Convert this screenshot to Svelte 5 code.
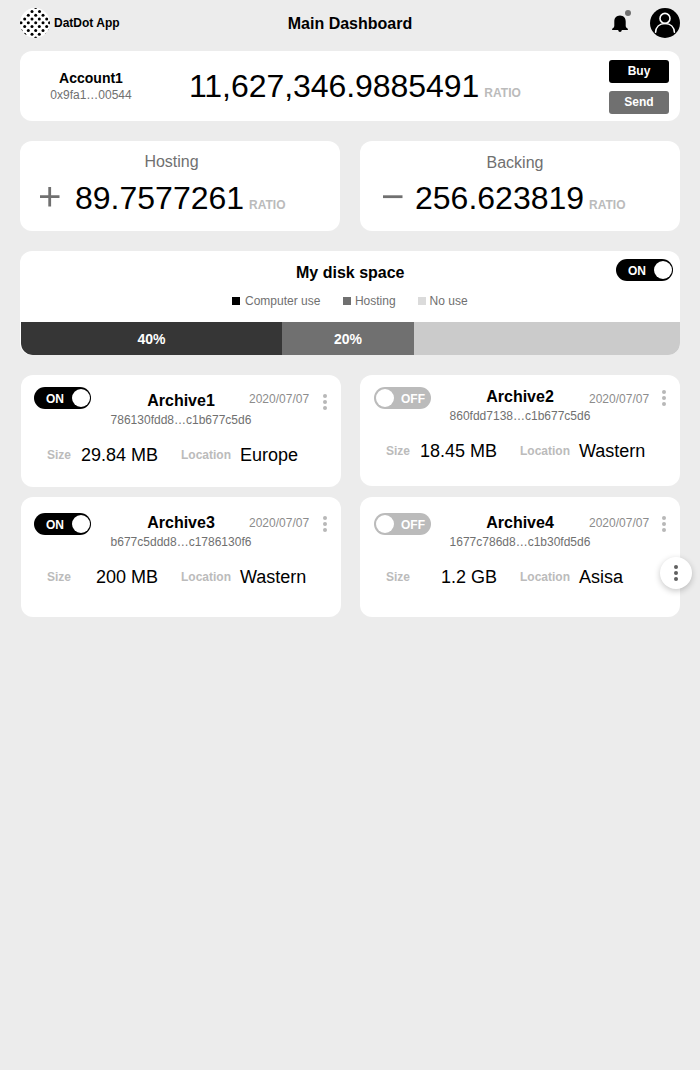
<script>
  const dotRows = [
    [15.7],
    [12, 19.5],
    [8.3, 15.7, 23],
    [4.7, 12, 19.3, 26.7],
    [1, 8.3, 15.7, 23, 29.5],
    [4.7, 12, 19.3, 26.7],
    [1, 8.3, 15.7, 23, 29.5],
    [4.7, 12, 19.3, 26.7],
    [15.7]
  ];
  const balances = [
    { label: 'Hosting', sign: 'plus', amount: '89.7577261' },
    { label: 'Backing', sign: 'minus', amount: '256.623819' }
  ];
  const legend = [
    { label: 'Computer use', color: '#000' },
    { label: 'Hosting', color: '#707070' },
    { label: 'No use', color: '#dbdbdb' }
  ];
  const archives = [
    { name: 'Archive1', hash: '786130fdd8…c1b677c5d6', on: true, size: '29.84 MB', location: 'Europe' },
    { name: 'Archive2', hash: '860fdd7138…c1b677c5d6', on: false, size: '18.45 MB', location: 'Wastern' },
    { name: 'Archive3', hash: 'b677c5ddd8…c1786130f6', on: true, size: '200 MB', location: 'Wastern' },
    { name: 'Archive4', hash: '1677c786d8…c1b30fd5d6', on: false, size: '1.2 GB', location: 'Asisa' }
  ];
</script>

{#snippet toggle(on)}
  <button class="toggle" class:off={!on}>
    <span class="state">{on ? 'ON' : 'OFF'}</span><span class="knob"></span>
  </button>
{/snippet}

{#snippet kebab(color)}
  <svg class="kebab" width="4" height="16" viewBox="0 0 4 16" fill={color}>
    <circle cx="2" cy="2" r="2" /><circle cx="2" cy="8" r="2" /><circle cx="2" cy="14" r="2" />
  </svg>
{/snippet}

<div class="page">
  <header>
    <div class="brand">
      <svg width="30" height="30" viewBox="0 0 30 30">
        <defs><clipPath id="disc"><circle cx="15" cy="15" r="15" /></clipPath></defs>
        <circle cx="15" cy="15" r="15" fill="#fff" />
        <g clip-path="url(#disc)">
          {#each dotRows as row, i}
            {#each row as x}<circle cx={x} cy={-0.4 + i * 3.8} r="1.5" />{/each}
          {/each}
        </g>
      </svg>
      <span>DatDot App</span>
    </div>
    <h1>Main Dashboard</h1>
    <div class="actions">
      <svg width="22" height="25" viewBox="0 0 22 25">
        <path d="M9 7.600C5.300 7.900 3.300 10 3.300 13.500v4.300c0 1.300-.6 2-1.400 2.500-.6.400-.9.700-.9 1.300 0 .3.200.5.500.5H7.200c.1 1.200.8 1.900 1.800 1.900s1.700-.7 1.800-1.900h5.700c.3 0 .5-.2.500-.5 0-.6-.3-.9-.9-1.300-.8-.5-1.400-1.200-1.400-2.500v-4.300C14.700 10 12.700 7.900 9 7.600z" />
        <circle cx="17" cy="5" r="3" fill="#707070" />
      </svg>
      <svg width="30" height="30" viewBox="0 0 30 30">
        <circle cx="15" cy="15" r="15" />
        <g fill="none" stroke="#fff" stroke-width="1.600" stroke-linecap="round">
          <circle cx="15" cy="10.400" r="5" />
          <path d="M5.600 24.300C5.900 19.300 9.300 15.500 15 15.500s9.100 3.800 9.400 8.800" />
        </g>
      </svg>
    </div>
  </header>

  <section class="card account">
    <div class="owner"><b>Account1</b><span>0x9fa1…00544</span></div>
    <div class="total"><span class="amount">11,627,346.9885491</span><span class="unit">RATIO</span></div>
    <div class="trade"><button>Buy</button><button class="send">Send</button></div>
  </section>

  <div class="balances">
    {#each balances as b}
      <section class="card balance {b.sign}">
        <h2>{b.label}</h2>
        <div class="row">
          <svg width="20" height="20" viewBox="0 0 20 20" stroke="#707070" stroke-width="2.800">
            <path d={b.sign === 'plus' ? 'M0 9.700H19.500M9.700 0V19.500' : 'M0 9.700H19.500'} />
          </svg>
          <span class="amount">{b.amount}</span><span class="unit">RATIO</span>
        </div>
      </section>
    {/each}
  </div>

  <section class="card disk">
    <div class="diskhead"><h2>My disk space</h2>{@render toggle(true)}</div>
    <ul>
      {#each legend as item}
        <li><i style:background={item.color}></i>{item.label}</li>
      {/each}
    </ul>
    <div class="bar"><span class="used">40%</span><span class="hosted">20%</span><span class="free"></span></div>
  </section>

  <div class="archives">
    {#each archives as a, i}
      <article class="card archive" class:right={i % 2} class:first={i === 0} class:second={i === 1}>
        <div class="top">
          {@render toggle(a.on)}
          <h3>{a.name}</h3>
          <time>2020/07/07</time>
          {@render kebab('#b8b8b8')}
        </div>
        <p class="hash">{a.hash}</p>
        <div class="facts">
          <span class="key">Size</span><span class="size">{a.size}</span>
          <span class="key loc">Location</span><span>{a.location}</span>
        </div>
      </article>
    {/each}
  </div>

  <button class="more" aria-label="More">{@render kebab('#606060')}</button>
</div>

<style>
  :global(body) { margin: 0; background: #ececec; }
  .page { position: relative; box-sizing: border-box; width: 700px; height: 1070px; padding: 0 20px; overflow: hidden; background: #ececec; color: #000; font-family: "Liberation Sans", Arial, sans-serif; white-space: nowrap; }
  h1, h2, h3, p, ul { margin: 0; padding: 0; }
  svg { display: block; flex: none; }
  button { border: 0; padding: 0; font: bold 12px/14px "Liberation Sans", Arial, sans-serif; color: #fff; }
  .card { box-sizing: border-box; background: #fff; border-radius: 12px; }
  header { display: grid; grid-template-columns: 200px 260px 200px; height: 51px; padding-top: 8px; box-sizing: border-box; align-items: start; }
  .brand { display: flex; gap: 4px; font: bold 12px/30px "Liberation Sans", Arial, sans-serif; }
  h1 { font-size: 16px; line-height: 32px; text-align: center; }
  .actions { display: flex; justify-content: flex-end; gap: 17px; }
  .account { display: flex; height: 70px; }
  .owner { display: flex; flex-direction: column; width: 142px; padding-top: 18px; text-align: center; }
  .owner b { font-size: 14px; line-height: 18px; }
  .owner span { font-size: 12px; line-height: 16px; color: #707070; }
  .total { display: flex; align-items: baseline; padding: 17px 0 0 27px; width: 420px; }
  .total .amount { letter-spacing: -.05px; }
  .amount { font-size: 32px; line-height: 36px; }
  .unit { margin-left: 5px; font-size: 12px; font-weight: bold; color: #bbb; }
  .trade { display: flex; flex-direction: column; gap: 8px; padding-top: 9px; }
  .trade button { width: 60px; height: 23px; padding-bottom: 2px; border-radius: 3px; background: #000; }
  .trade .send { background: #707070; }
  .balances { display: grid; grid-template-columns: 320px 320px; gap: 20px; margin-top: 20px; }
  .balance { height: 90px; padding-top: 11px; }
  .balance h2 { width: 303px; font-size: 16px; font-weight: normal; line-height: 20px; text-align: center; color: #707070; }
  .minus { padding-top: 12px; }
  .minus h2 { width: 310px; }
  .balance .row { display: flex; align-items: baseline; padding: 8px 0 0 20px; }
  .minus .row { padding: 7px 0 0 23px; }
  .row svg { align-self: flex-start; margin: 7px 15px 0 0; }
  .minus svg { margin-right: 12px; }
  .disk { height: 104px; margin-top: 20px; overflow: hidden; }
  .diskhead { display: flex; justify-content: flex-end; height: 39px; }
  .diskhead h2 { width: 108px; margin: 12px 212px 0 0; font-size: 16px; line-height: 20px; }
  .diskhead .toggle { margin: 8px 7px 0 0; }
  .toggle { display: flex; align-items: center; justify-content: space-between; flex: none; box-sizing: border-box; width: 57px; height: 22px; padding: 0 1.5px 0 12px; border-radius: 11px; background: #000; }
  .state { padding-top: 1px; }
  .knob { width: 18px; height: 18px; border-radius: 50%; background: #fff; }
  .toggle.off { flex-direction: row-reverse; padding: 0 6px 0 1.5px; background: #bbb; }
  ul { display: flex; list-style: none; padding-left: 212px; gap: 22.5px; height: 32px; font-size: 12px; line-height: 22px; color: #707070; }
  li { display: flex; align-items: center; gap: 4px; height: 22px; }
  li:first-child { gap: 5px; }
  li:last-child { margin-left: -.5px; }
  i { width: 8px; height: 8px; }
  .bar { display: flex; height: 33px; padding-left: 1px; background: #fff; font-size: 14px; font-weight: bold; line-height: 35px; text-align: center; color: #fff; }
  .used { width: 261px; border-bottom-left-radius: 12px; background: #363636; }
  .hosted { width: 132px; background: #707070; }
  .free { flex: 1; background: #cbcbcb; }
  .archives { display: grid; grid-template-columns: 320px 320px; gap: 10px 19px; margin: 20px 0 0 1px; align-items: start; }
  .archive { height: 120px; padding: 16px 0 0 13px; }
  .archive.first { height: 112px; }
  .archive.second { height: 111px; padding-top: 12px; }
  .right .toggle { margin: 0 -1px 0 1px; }
  .first .toggle { margin-top: -4px; }
  .top { display: flex; height: 21px; align-items: flex-start; }
  .top h3 { width: 180px; margin: 0 -42px 0 0; font-size: 16px; line-height: 20px; text-align: center; }
  .top time { width: 60px; margin-left: 20px; font-size: 12px; line-height: 20px; color: #8c8c8c; }
  .right .top time { margin-left: 21px; }
  .first .top time { margin-top: -2px; }
  .second .top time { margin-top: 2px; }
  .top .kebab { margin: 3px 0 0 14px; }
  .right .top .kebab { margin-left: 13px; }
  .hash { padding-right: 13px; font-size: 12px; line-height: 16px; text-align: center; color: #707070; }
  .facts { display: flex; align-items: center; margin-top: 15px; padding-left: 13px; font-size: 18px; line-height: 24px; }
  .key { font-size: 12px; font-weight: bold; color: #bbb; }
  .size { width: 87px; text-align: right; }
  .loc { width: 50px; margin: 0 9px 0 23px; }
  .more { position: absolute; left: 660px; top: 557px; display: grid; place-items: center; width: 32px; height: 32px; border-radius: 50%; background: #fff; box-shadow: 0 2px 6px rgba(0, 0, 0, .22); }
</style>
